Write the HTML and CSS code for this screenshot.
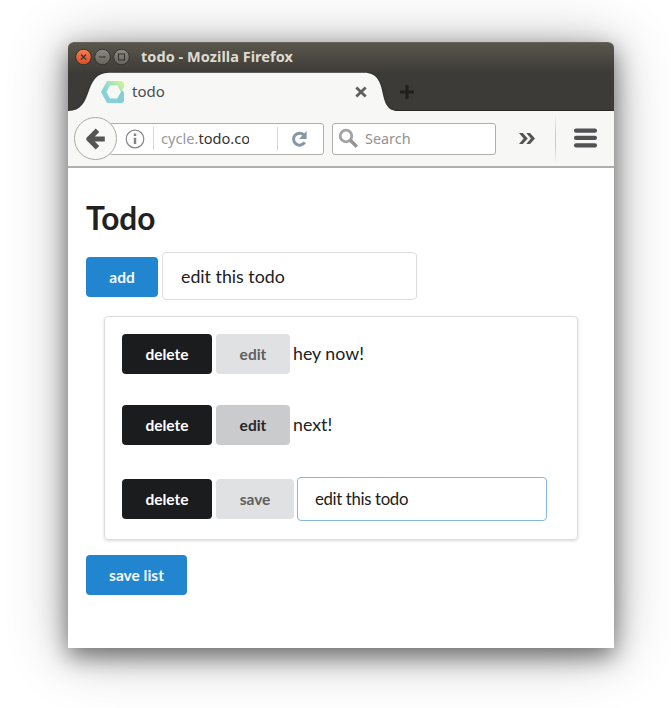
FILE: index.html
```html
<!DOCTYPE html>
<html lang="en">
<head>
<meta charset="utf-8">
<title>todo</title>
<link rel="stylesheet" href="styles.css">
</head>
<body>
<div class="window">
  <header class="titlebar">
    <svg class="controls" width="56" height="18" viewBox="0 0 56 18">
      <defs>
        <linearGradient id="red" x2="0" y2="1"><stop stop-color="#f58057"/><stop offset="1" stop-color="#dc4a20"/></linearGradient>
        <linearGradient id="gray" x2="0" y2="1"><stop stop-color="#8d8a82"/><stop offset="1" stop-color="#66635c"/></linearGradient>
      </defs>
      <g stroke="#34332f">
        <circle cx="8.5" cy="9" r="7.8" fill="url(#red)"/>
        <circle cx="27.5" cy="9" r="7.8" fill="url(#gray)"/>
        <circle cx="46.5" cy="9" r="7.8" fill="url(#gray)"/>
        <path d="M6 6.5l5 5M11 6.5l-5 5M24 9h7M43.5 6h6v6h-6z" fill="none" stroke-width="1.1"/>
      </g>
    </svg>
    <span class="title">todo - Mozilla Firefox</span>
  </header>
  <div class="tabstrip">
    <div class="tab">
      <svg class="tab-shape" width="330" height="39" viewBox="0 0 330 39">
        <path d="M0 39C27 39 14 .7 41 .7H296C323 .7 307 39 330 39Z" fill="#f7f7f5"/>
      </svg>
      <svg class="favicon" width="24" height="22" viewBox="0 0 24 22">
        <defs><linearGradient id="fav" x1=".35" y1=".65" x2="1" y2="0"><stop stop-color="#86d1d7"/><stop offset=".45" stop-color="#a5e2bf"/><stop offset="1" stop-color="#d9fa84"/></linearGradient></defs>
        <path d="M6 0H21L23 2V20L21 22H6L0 11ZM9 4.5L5.5 11L9 17.5H16.5L20 11L16.5 4.5Z" fill="url(#fav)" fill-rule="evenodd"/>
        <path d="M20 11L21 9L23 12V20L21 22H15L16.5 17.5Z" fill="#82cdd6"/>
        <path d="M21 8.5L23.5 6V12.5Z" fill="#f7f7f5"/>
      </svg>
      <span class="tab-label">todo</span>
      <svg class="tab-close" width="12" height="12" viewBox="0 0 12 12"><path d="M1.3 1.5l9.4 9M10.7 1.5l-9.4 9" stroke="#5f5f5e" stroke-width="2.8"/></svg>
    </div>
    <svg class="new-tab" width="14" height="14" viewBox="0 0 14 14"><path d="M7 0v14M0 7h14" stroke="#1f1f1c" stroke-width="3"/></svg>
  </div>
  <nav class="toolbar">
    <div class="back">
      <svg width="20" height="22" viewBox="0 0 20 22"><path d="M18.8 11H4M11.5 2.3L2.8 11l8.7 8.7" fill="none" stroke="#555" stroke-width="5" stroke-linejoin="round"/></svg>
    </div>
    <div class="url">
      <svg width="20" height="20" viewBox="0 0 20 20"><circle cx="10" cy="10" r="8.8" fill="none" stroke="#858585" stroke-width="1.2"/><path d="M10 4.5v2.6M10 8.8v6.2" stroke="#858585" stroke-width="2.5"/></svg>
      <i class="divider"></i>
      <span class="address">cycle.<b>todo.co</b></span>
      <i class="divider"></i>
      <svg class="reload" width="17" height="18" viewBox="0 0 17 18"><path d="M12.8 4.9A6 6 0 1 0 13.7 12.3" fill="none" stroke="#8597a4" stroke-width="3"/><path d="M15.6 1v8H8Z" fill="#8597a4"/></svg>
    </div>
    <div class="search">
      <svg width="21" height="21" viewBox="0 0 21 21"><circle cx="8" cy="8" r="5.8" fill="none" stroke="#a2a2a2" stroke-width="2.8"/><path d="M12.3 12.3l6.5 6.5" stroke="#949494" stroke-width="3.4"/></svg>
      <span>Search</span>
    </div>
    <svg class="more" width="18" height="13" viewBox="0 0 18 13"><path d="M1 1h3.8L9.8 6.5l-5 5.5H1l4.6-5.5ZM8.3 1H12l5 5.5-5 5.5H8.3l4.6-5.5Z" fill="#555"/></svg>
    <i class="separator"></i>
    <svg class="menu" width="23" height="20" viewBox="0 0 23 20"><g fill="#525254"><rect y=".5" width="23" height="4.3" rx="2"/><rect y="7.8" width="23" height="4.3" rx="2"/><rect y="15.2" width="23" height="4.3" rx="2"/></g></svg>
  </nav>
  <main class="page">
    <h1>Todo</h1>
    <div class="row add-row">
      <button class="button primary">add</button>
      <div class="field">edit this todo</div>
    </div>
    <section class="list">
      <div class="row">
        <button class="button black">delete</button>
        <button class="button">edit</button>
        <span class="item">hey now!</span>
      </div>
      <div class="row">
        <button class="button black">delete</button>
        <button class="button hovered">edit</button>
        <span class="item">next!</span>
      </div>
      <div class="row editing">
        <button class="button black">delete</button>
        <button class="button save">save</button>
        <div class="field focused">edit this todo</div>
      </div>
    </section>
    <button class="button primary save-list">save list</button>
  </main>
</div>
</body>
</html>
```
FILE: styles.css
```css
* { box-sizing: border-box; }
html { height: 100%; overflow: hidden; }
body {
  margin: 0;
  padding: 42px 57px 0 68px;
  height: 708px;
  overflow: hidden;
  background: #fff;
  font-family: "Noto Sans", "Open Sans", sans-serif;
}
svg { display: block; flex: none; }
.window {
  width: 546px;
  height: 606px;
  border-radius: 6px 6px 0 0;
  background: #fff;
  box-shadow: 0 8px 24px rgba(0, 0, 0, .5), 0 4px 60px rgba(0, 0, 0, .3);
}
.titlebar {
  display: flex;
  align-items: center;
  height: 30px;
  padding: 0 0 2px 7px;
  border-top: 1px solid #66635a;
  border-radius: 6px 6px 0 0;
  background: linear-gradient(#59564c, #3e3c37);
}
.title {
  margin: -2px 0 0 10px;
  color: #dfdbd2;
  font-size: 14.5px;
  font-weight: 700;
  line-height: 20px;
  letter-spacing: .05px;
  white-space: nowrap;
}
.tabstrip {
  display: flex;
  align-items: center;
  height: 39px;
  background: #3c3b37;
  box-shadow: inset 0 -1px #282724;
}
.tab {
  position: relative;
  display: flex;
  align-items: center;
  width: 330px;
  height: 39px;
  padding-left: 33px;
}
.tab-shape { position: absolute; inset: 0; filter: drop-shadow(0 0 1px #20242a); clip-path: inset(0); }
.favicon, .tab-label, .tab-close { position: relative; }
.tab-label { width: 223px; margin: -2px 0 0 7px; color: #4c4c4c; font-size: 15px; line-height: 20px; }
.new-tab { margin-left: 2px; }
.toolbar {
  display: flex;
  align-items: center;
  height: 57px;
  padding: 0 0 0 6px;
  border-bottom: 2px solid #b0afa8;
  background: #f7f7f5;
}
.back {
  z-index: 1;
  display: flex;
  align-items: center;
  justify-content: center;
  flex: none;
  width: 43px;
  height: 43px;
  border: 1px solid #aaa9a2;
  border-radius: 50%;
  background: #f9f9f7;
}
.url, .search {
  display: flex;
  align-items: center;
  flex: none;
  height: 32px;
  border: 1px solid #b0afa8;
  border-radius: 3px;
  background: #fff;
  font-size: 14px;
  line-height: 20px;
}
.url { width: 215px; margin-left: -8px; padding-left: 15px; }
.divider { flex: none; width: 1px; height: 23px; margin-left: 8px; background: #d5d5d3; }
.address { width: 88px; margin: -1px 28px 0 7px; overflow: hidden; color: #999; font-size: 14.6px; white-space: nowrap; }
.address b { color: #333; font-weight: 400; }
.address + .divider { margin-left: 0; }
.reload { margin-left: 13px; }
.search { width: 164px; margin-left: 8px; padding-left: 5px; color: #929292; }
.search span { margin: 1px 0 0 6px; font-size: 14.4px; }
.more { margin-left: 22px; }
.separator { width: 1px; height: 50px; margin-left: 19px; background: linear-gradient(transparent, #ccc 35%, #ccc 65%, transparent); }
.menu { margin: -1px 0 0 18px; }
.page {
  padding: 32px 18px 0;
  color: #212121;
  font-family: Lato, sans-serif;
}
h1 { margin: 0 0 16px; font-size: 31.6px; font-weight: 700; line-height: 36px; }
.row { display: flex; align-items: center; }
.button {
  flex: none;
  width: 74px;
  height: 40px;
  margin: 0 4px 0 0;
  padding: 0;
  border: 0;
  border-radius: 4px;
  background: #e0e1e2;
  color: #5f5f60;
  font: 700 15.5px/40px Lato, sans-serif;
}
.primary { width: 72px; background: #2185d0; color: #f4f9fd; }
.add-row .button { margin-top: 2px; }
.black { width: 90px; background: #1b1c1d; color: #fff; }
.hovered { background: #cacbcd; color: #262728; }
.save { width: 78px; margin-right: 3px; }
.save-list { display: block; width: 101px; }
.field {
  width: 255px;
  height: 48px;
  padding: 0 18px;
  border: 1px solid #dcddde;
  border-radius: 4px;
  background: #fff;
  font-size: 17.8px;
  line-height: 47px;
}
.focused { width: 250px; height: 44px; border-color: #85b7d9; padding: 0 17px; font-size: 16.8px; letter-spacing: -.35px; line-height: 42px; }
.list {
  width: 474px;
  height: 224px;
  margin: 16px 0 15px 18px;
  padding: 17px;
  border: 1px solid #dcddde;
  border-radius: 4px;
  box-shadow: 0 1px 3px rgba(34, 36, 38, .17);
}
.list .row { height: 40px; margin-bottom: 31px; }
.list .editing { height: 44px; margin-top: 32px; margin-bottom: 0; }
.item { margin: -2px 0 0 -1px; font-size: 17.8px; line-height: 38px; }
```
